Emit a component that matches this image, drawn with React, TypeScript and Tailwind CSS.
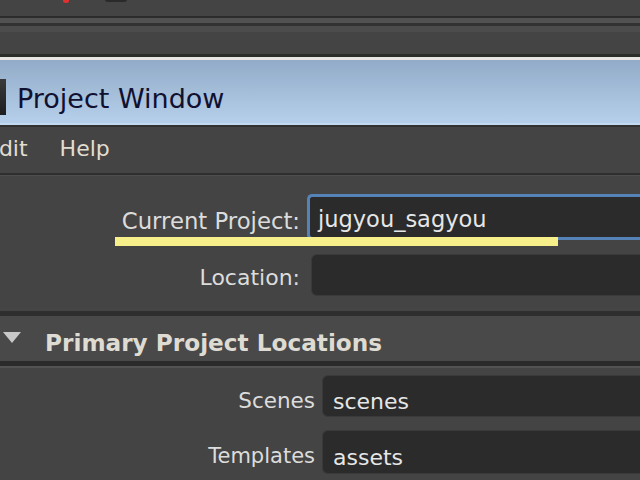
import React from "react";

const font = { fontFamily: '"DejaVu Sans", "Noto Sans", sans-serif' };

export default function App() {
  return (
    <div className="relative w-[640px] h-[480px] overflow-hidden bg-[#444444]" style={font}>
      {/* top strip */}
      <div className="relative h-[16px] bg-[#444444]">
        <div className="absolute left-[63px] top-[-2px] w-[6px] h-[5px] rounded-full bg-[#e03030]" />
        <div className="absolute left-[105px] top-[-3px] w-[22px] h-[5px] rounded-full bg-[#2a2a2a]" />
      </div>
      <div className="h-[2px] bg-[#2c2c2c]" />
      <div className="h-[5px] bg-[#525252]" />
      <div className="h-[3px] bg-[#323232]" />
      <div className="h-[6px] bg-[#4c4c4c]" />
      <div className="h-[22px] bg-[#444444]" />
      <div className="h-[3px] bg-[#2a2d2a]" />
      <div className="h-[3px] bg-[#e8e6e2]" />
      {/* title bar */}
      <div className="flex h-[63px] items-center bg-gradient-to-b from-[#92abc8] to-[#b6cfea]">
        <div className="h-[36px] w-[6px] bg-gradient-to-b from-[#3a3a3a] to-[#1e1e1e] mt-[10px]" />
        <span className="ml-[11px] text-[27px] leading-none text-[#101030] mt-[13px]">Project Window</span>
      </div>
      <div className="h-[2px] bg-[#c4daf0]" />
      <div className="h-[2px] bg-[#333333]" />
      {/* menu bar */}
      <div className="flex h-[46px] items-center text-[22px] leading-none text-[#e2ddd0]">
        <span className="ml-[-15px] -mt-[2px]">Edit</span>
        <span className="ml-[32px] -mt-[2px]">Help</span>
      </div>
      <div className="h-[2px] bg-[#2e2e2e]" />
      <div className="h-[1px] bg-[#4e4e4e]" />
      {/* project rows */}
      <div className="flex flex-col pt-[18px] h-[135px]">
        <div className="flex items-center h-[46px]">
          <div className="w-[300px] text-right text-[22.75px] leading-none text-[#dcdcdc] mt-[8px]">Current Project:</div>
          <div className="ml-[7px] flex-1 h-[46px] rounded-l-[5px] border-[3px] border-r-0 border-[#5583b8] bg-[#2b2b2b] flex items-center pl-[8px] text-[22.5px] leading-none text-[#e6e6e6]">
            <span className="mt-[5px]">jugyou_sagyou</span>
          </div>
        </div>
        <div className="flex items-center h-[42px] mt-[14px]">
          <div className="w-[300px] text-right text-[22px] leading-none text-[#dcdcdc] mt-[6px]">Location:</div>
          <div className="ml-[11px] flex-1 h-[42px] rounded-l-[6px] border border-r-0 border-[#3a3a3a] bg-[#2b2b2b]" />
        </div>
      </div>
      <div className="h-[5px] bg-[#2e2e2e]" />
      {/* section header */}
      <div className="flex h-[45px] items-center bg-[#494949]">
        <svg width="18" height="12" viewBox="0 0 18 12" className="ml-[3px] -mt-[2px]">
          <polygon points="0,0 18,0 9,11" fill="#c8c8c8" />
        </svg>
        <span className="ml-[24px] text-[23.2px] leading-none font-bold text-[#dedbd2] mt-[8px]">Primary Project Locations</span>
      </div>
      <div className="h-[5px] bg-[#2a2a2a]" />
      <div className="h-[2px] bg-[#525252]" />
      {/* locations */}
      <div className="flex flex-col pt-[7px]">
        <div className="flex items-center h-[42px]">
          <div className="w-[315px] text-right text-[21.5px] leading-none text-[#dcdcdc] mt-[10px]">Scenes</div>
          <div className="ml-[7px] flex-1 h-[42px] rounded-l-[6px] border border-r-0 border-[#3a3a3a] bg-[#2b2b2b] flex items-center pl-[10px] text-[22px] leading-none text-[#e6e6e6]">
            <span className="mt-[12px]">scenes</span>
          </div>
        </div>
        <div className="flex items-center h-[44px] mt-[13px]">
          <div className="w-[315px] text-right text-[21px] leading-none text-[#dcdcdc] mt-[8px]">Templates</div>
          <div className="ml-[7px] flex-1 h-[44px] rounded-l-[6px] border border-r-0 border-[#3a3a3a] bg-[#2b2b2b] flex items-center pl-[10px] text-[22px] leading-none text-[#e6e6e6]">
            <span className="mt-[12px]">assets</span>
          </div>
        </div>
      </div>
      {/* yellow annotation */}
      <div className="absolute left-[115px] top-[237px] w-[443px] h-[9px] bg-[#f7ef8a]" />
    </div>
  );
}
